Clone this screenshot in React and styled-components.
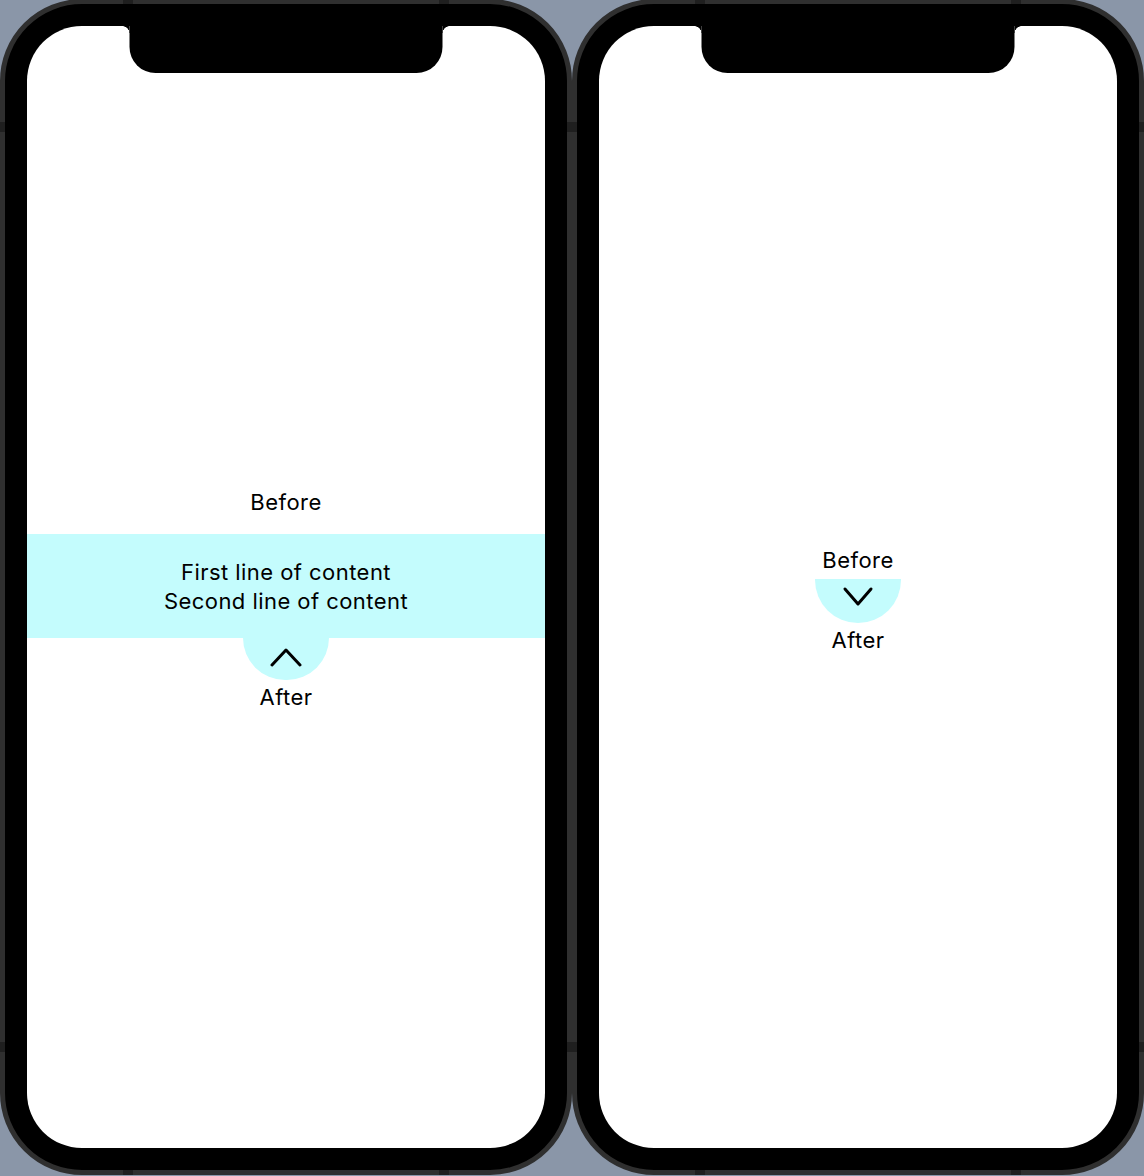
import React from "react";
import styled, { createGlobalStyle } from "styled-components";

const GlobalStyle = createGlobalStyle`
  html, body {
    margin: 0;
    padding: 0;
    background: #8a96a8;
  }
  body {
    font-family: Inter, "Noto Sans", "Liberation Sans", sans-serif;
    color: #000;
  }
`;

const Page = styled.div`
  display: flex;
  width: 1144px;
  height: 1176px;
  overflow: hidden;
  background: #8a96a8;
`;

const PhoneFrame = styled.div`
  position: relative;
  flex: 0 0 572px;
  height: 1176px;
  margin-top: -1px;
  box-sizing: border-box;
  border: 5px solid #2f2f2f;
  border-radius: 82px;
  background: #000;
  padding: 22px;
  display: flex;
`;

const AntennaMark = styled.span`
  position: absolute;
  background: #1f1f1f;
  ${({ side }) =>
    side === "top" || side === "bottom"
      ? `width: 10px; height: 5px; ${side}: -5px;`
      : `width: 5px; height: 10px; ${side}: -5px;`}
  ${({ offset, from }) => `${from}: ${offset}px;`}
`;

const Screen = styled.div`
  position: relative;
  flex: 1;
  background: #fff;
  border-radius: 55px;
  overflow: hidden;
  display: flex;
  flex-direction: column;
  justify-content: center;
  padding: 47px 0 21px;
`;

const Notch = styled.div`
  position: absolute;
  top: 0;
  left: 50%;
  transform: translateX(-50%);
  width: 313px;
  height: 47px;
  background: #000;
  border-radius: 0 0 26px 26px;

  &::before,
  &::after {
    content: "";
    position: absolute;
    top: 0;
    width: 7px;
    height: 7px;
  }
  &::before {
    left: -7px;
    background: radial-gradient(circle at 0 100%, transparent 6.5px, #000 7px);
  }
  &::after {
    right: -7px;
    background: radial-gradient(circle at 100% 100%, transparent 6.5px, #000 7px);
  }
`;

const Stack = styled.div`
  display: flex;
  flex-direction: column;
  align-items: center;
`;

const Label = styled.div`
  font-size: 22px;
  line-height: 29px;
  letter-spacing: 0.45px;
  text-align: center;
  margin: ${({ m }) => m || "0"};
`;

const ContentBand = styled.div`
  align-self: stretch;
  background: #c4fcfd;
  padding: 24px 0 22px;
  display: flex;
  flex-direction: column;
  align-items: center;
`;

const Toggle = styled.div`
  width: 86px;
  height: ${({ h }) => h}px;
  background: #c4fcfd;
  border-radius: 0 0 43px 43px;
  display: flex;
  justify-content: center;
  align-items: flex-start;
  padding-top: ${({ pt }) => pt}px;
  box-sizing: border-box;
`;

const Chevron = ({ up }) => (
  <svg width="32" height="22" viewBox="0 0 32 22" fill="none">
    <polyline
      points={up ? "2,19 16,4 30,19" : "3,3 16,18 29,3"}
      stroke="#000"
      strokeWidth="3"
      strokeLinecap="round"
      strokeLinejoin="round"
    />
  </svg>
);

const marks = [
  { side: "top", from: "left", offset: 118 },
  { side: "top", from: "right", offset: 118 },
  { side: "bottom", from: "left", offset: 118 },
  { side: "bottom", from: "right", offset: 118 },
  { side: "left", from: "top", offset: 118 },
  { side: "right", from: "top", offset: 118 },
  { side: "left", from: "bottom", offset: 118 },
  { side: "right", from: "bottom", offset: 118 },
];

const Phone = ({ children }) => (
  <PhoneFrame>
    {marks.map((m, i) => (
      <AntennaMark key={i} {...m} />
    ))}
    <Screen>
      <Notch />
      {children}
    </Screen>
  </PhoneFrame>
);

const Disclosure = ({ expanded }) => (
  <Stack>
    <Label m={expanded ? "0 0 17px" : "0 0 4px"}>Before</Label>
    {expanded && (
      <ContentBand>
        <Label>First line of content</Label>
        <Label>Second line of content</Label>
      </ContentBand>
    )}
    <Toggle h={expanded ? 42 : 44} pt={expanded ? 8 : 7}>
      <Chevron up={expanded} />
    </Toggle>
    <Label m="3px 0 0">After</Label>
  </Stack>
);

export default function App() {
  return (
    <>
      <GlobalStyle />
      <Page>
        <Phone>
          <Disclosure expanded />
        </Phone>
        <Phone>
          <Disclosure />
        </Phone>
      </Page>
    </>
  );
}
